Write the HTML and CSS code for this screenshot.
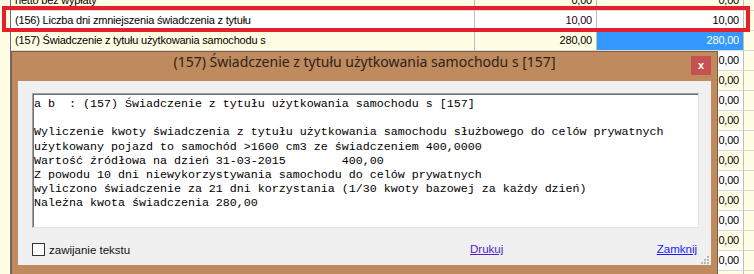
FILE: index.html
```html
<!DOCTYPE html>
<html lang="pl">
<head>
<meta charset="utf-8">
<title>Świadczenie</title>
<link rel="stylesheet" href="styles.css">
</head>
<body>
<div class="screen">
  <div class="grid">
    <div class="row alt"><div class="gutter"></div><div class="cell label">netto bez wypłaty</div><div class="cell num v1">0,00</div><div class="cell num v2">0,00</div><div class="cell extra"></div></div>
    <div class="row"><div class="gutter"></div><div class="cell label">(156) Liczba dni zmniejszenia świadczenia z tytułu</div><div class="cell num v1 purple">10,00</div><div class="cell num v2">10,00</div><div class="cell extra"></div></div>
    <div class="row alt"><div class="gutter"></div><div class="cell label">(157) Świadczenie z tytułu użytkowania samochodu s</div><div class="cell num v1">280,00</div><div class="cell num v2 selected">280,00</div><div class="cell extra"></div></div>
    <div class="row"><div class="gutter"></div><div class="cell label"></div><div class="cell num v1"></div><div class="cell num v2">0,00</div><div class="cell extra"></div></div>
    <div class="row alt"><div class="gutter"></div><div class="cell label"></div><div class="cell num v1"></div><div class="cell num v2">0,00</div><div class="cell extra"></div></div>
    <div class="row"><div class="gutter"></div><div class="cell label"></div><div class="cell num v1"></div><div class="cell num v2">0,00</div><div class="cell extra"></div></div>
    <div class="row alt"><div class="gutter"></div><div class="cell label"></div><div class="cell num v1"></div><div class="cell num v2">0,00</div><div class="cell extra"></div></div>
    <div class="row"><div class="gutter"></div><div class="cell label"></div><div class="cell num v1"></div><div class="cell num v2">0,00</div><div class="cell extra"></div></div>
    <div class="row alt"><div class="gutter"></div><div class="cell label"></div><div class="cell num v1"></div><div class="cell num v2">0,00</div><div class="cell extra"></div></div>
    <div class="row"><div class="gutter"></div><div class="cell label"></div><div class="cell num v1"></div><div class="cell num v2">0,00</div><div class="cell extra"></div></div>
    <div class="row alt"><div class="gutter"></div><div class="cell label"></div><div class="cell num v1"></div><div class="cell num v2">0,00</div><div class="cell extra"></div></div>
    <div class="row"><div class="gutter"></div><div class="cell label"></div><div class="cell num v1"></div><div class="cell num v2">0,00</div><div class="cell extra"></div></div>
    <div class="row alt"><div class="gutter"></div><div class="cell label"></div><div class="cell num v1"></div><div class="cell num v2">0,00</div><div class="cell extra"></div></div>
    <div class="row"><div class="gutter"></div><div class="cell label"></div><div class="cell num v1"></div><div class="cell num v2">0,00</div><div class="cell extra"></div></div>
    <div class="row alt"><div class="gutter"></div><div class="cell label"></div><div class="cell num v1"></div><div class="cell num v2">0,00</div><div class="cell extra"></div></div>
  </div>

  <div class="highlight"></div>

  <div class="dialog">
    <div class="titlebar">
      <span></span>
      <div class="title">(157) Świadczenie z tytułu użytkowania samochodu s [157]</div>
      <div class="close">x</div>
    </div>
    <div class="client">
<pre class="output">a b  : (157) Świadczenie z tytułu użytkowania samochodu s [157]

Wyliczenie kwoty świadczenia z tytułu użytkowania samochodu służbowego do celów prywatnych
użytkowany pojazd to samochód >1600 cm3 ze świadczeniem 400,0000
Wartość źródłowa na dzień 31-03-2015        400,00
Z powodu 10 dni niewykorzystywania samochodu do celów prywatnych
wyliczono świadczenie za 21 dni korzystania (1/30 kwoty bazowej za każdy dzień)
Należna kwota świadczenia 280,00</pre>
      <div class="footer">
        <label class="wrap"><span class="checkbox"></span><span class="wrap-text">zawijanie tekstu</span></label>
        <a class="link visited">Drukuj</a>
        <a class="link close-link">Zamknij</a>
      </div>
      <svg class="grip" width="8" height="8" viewBox="0 0 8 8">
        <rect x="6" y="0" width="2" height="2" fill="#b9b9b9"/>
        <rect x="3" y="3" width="2" height="2" fill="#b9b9b9"/>
        <rect x="6" y="3" width="2" height="2" fill="#b9b9b9"/>
        <rect x="0" y="6" width="2" height="2" fill="#b9b9b9"/>
        <rect x="3" y="6" width="2" height="2" fill="#b9b9b9"/>
        <rect x="6" y="6" width="2" height="2" fill="#b9b9b9"/>
      </svg>
    </div>
  </div>
</div>
</body>
</html>
```

FILE: styles.css
```css
* { box-sizing: border-box; }

html, body {
  margin: 0;
  padding: 0;
}

body {
  width: 754px;
  height: 274px;
  overflow: hidden;
  background: #fffde3;
  font-family: "Liberation Sans", Arial, sans-serif;
}

.screen {
  position: relative;
  width: 754px;
  height: 274px;
  overflow: hidden;
}

/* background grid */
.grid {
  margin-top: -9px;
  display: flex;
  flex-direction: column;
}

.row {
  display: flex;
  height: 20px;
}

.gutter {
  width: 11px;
  height: 20px;
  background: #fffde3;
  border-right: 1px solid #6e6e6e;
}

.cell {
  height: 20px;
  background: #ffffff;
  border-bottom: 1px solid #dadada;
  border-right: 1px solid #bdbdbd;
  font-size: 11px;
  letter-spacing: -0.2px;
  line-height: 19px;
  white-space: nowrap;
  overflow: hidden;
  color: #000;
}

.row.alt .cell { background: #fffde3; }

.label {
  width: 464px;
  padding-left: 4px;
}

.num {
  text-align: right;
  padding-right: 4px;
}

.v1 { width: 122px; }
.v2 { width: 147px; }

.purple { color: #220022; }

.row .cell.selected {
  background: #3399ff;
  color: #ffffff;
}

.row .cell.extra {
  flex: 1;
  border-right: none;
  background: #fffde3;
}

/* red annotation frame */
.highlight {
  position: absolute;
  left: 2px;
  top: 6px;
  width: 748px;
  height: 26px;
  border: 4px solid #e4202a;
}

/* dialog window */
.dialog {
  position: absolute;
  left: 11px;
  top: 51px;
  width: 707px;
  height: 224px;
  background: #bf8b5e;
  border: 1px solid #7f5d3f;
  padding: 0 6px 9px 6px;
  display: flex;
  flex-direction: column;
}

.titlebar {
  height: 29px;
  display: grid;
  grid-template-columns: 20px 1fr 20px;
  align-items: start;
}

.title {
  text-align: center;
  font-family: "Noto Sans", "Liberation Sans", sans-serif;
  font-size: 14px;
  line-height: 20px;
  color: #2e2218;
  white-space: nowrap;
}

.close {
  margin-top: 4px;
  width: 20px;
  height: 19px;
  background: #c75050;
  color: #ffffff;
  font: bold 11px/18px "Liberation Sans", Arial, sans-serif;
  text-align: center;
}

.client {
  flex: 1;
  position: relative;
  background: #f0f0f0;
  padding: 12px 12px 0 14px;
  display: flex;
  flex-direction: column;
}

.output {
  margin: 0;
  height: 135px;
  background: #ffffff;
  border: 1px solid;
  border-color: #a0a0a0 #e3e3e3 #e3e3e3 #a0a0a0;
  box-shadow: inset 1px 1px 0 #6e6e6e;
  padding: 3px 1px 2px 1px;
  font-family: "Liberation Mono", "Courier New", monospace;
  font-size: 11.67px;
  line-height: 14.2px;
  white-space: pre;
  color: #000;
  overflow: hidden;
}

.footer {
  margin-top: 15px;
  height: 13px;
  display: grid;
  grid-template-columns: 438px 1fr auto;
  align-items: center;
  font-size: 11.5px;
}

.wrap {
  display: flex;
  align-items: center;
  color: #111;
}

.checkbox {
  width: 13px;
  height: 13px;
  border: 1px solid #333333;
  background: #ffffff;
}

.wrap-text {
  margin-left: 4px;
}

.link {
  text-decoration: underline;
  line-height: 13px;
}

.visited { color: #4f1ec8; }

.close-link {
  color: #1a1aff;
  margin-right: 2px;
}

.grip {
  position: absolute;
  right: 2px;
  bottom: 1px;
}
```
